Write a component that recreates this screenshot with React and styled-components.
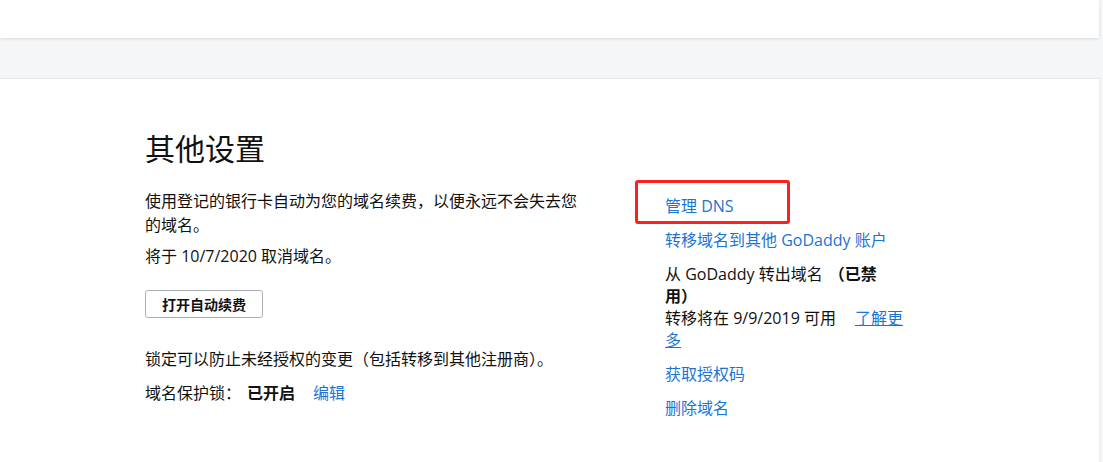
import React from "react";
import styled, { createGlobalStyle } from "styled-components";

const GlobalStyle = createGlobalStyle`
  html, body {
    margin: 0;
    padding: 0;
    background: #f5f6f8;
    font-family: "Open Sans", "Noto Sans CJK SC", sans-serif;
    color: #111;
  }
`;

const Page = styled.div`
  padding-right: 4px;
  min-height: 100vh;
  box-sizing: border-box;
  display: flex;
  flex-direction: column;
  gap: 40px;
`;

const TopCard = styled.div`
  height: 38px;
  flex-shrink: 0;
  background: #fff;
  box-shadow: 0 1px 3px rgba(0, 0, 0, 0.12);
`;

const Card = styled.section`
  flex: 1;
  background: #fff;
  border-top: 1px solid #e8e9ec;
  box-shadow: 1px 0 2px rgba(0, 0, 0, 0.06);
  padding: 50px 0 20px 145px;
`;

const Title = styled.h2`
  margin: 0 0 20px;
  font-size: 30px;
  line-height: 40px;
  font-weight: 400;
`;

const Columns = styled.div`
  display: flex;
  gap: 80px;
`;

const LeftCol = styled.div`
  width: 440px;
  display: flex;
  flex-direction: column;
`;

const Text = styled.p`
  margin: 0 0 ${(p) => p.$gap || 0}px;
  font-size: 16px;
  line-height: 24px;
`;

const Button = styled.button`
  align-self: flex-start;
  width: 118px;
  height: 28px;
  margin: 22px 0 29px;
  background: #fff;
  border: 1px solid #a9aeb5;
  border-radius: 3px;
  font-family: inherit;
  font-size: 14px;
  font-weight: 700;
  color: #111;
  padding: 0;
`;

const Strong = styled.b`
  font-weight: 700;
  margin-left: ${(p) => p.$ml || 0}px;
`;

const Link = styled.a`
  color: #1b74d4;
  text-decoration: ${(p) => (p.$underline ? "underline" : "none")};
  margin-left: ${(p) => p.$ml || 0}px;
  cursor: pointer;
`;

const RightCol = styled.div`
  width: 240px;
  padding-top: 6px;
  display: flex;
  flex-direction: column;
  gap: 12px;
`;

const Item = styled.div`
  position: relative;
  font-size: 16px;
  line-height: 22px;
`;

const Highlight = styled.span`
  position: absolute;
  left: -30px;
  top: -15px;
  width: 155px;
  height: 44px;
  box-sizing: border-box;
  border: 3px solid #ff1f1f;
  border-radius: 3px;
  pointer-events: none;
`;

export default function App() {
  return (
    <>
      <GlobalStyle />
      <Page>
        <TopCard />
        <Card>
          <Title>其他设置</Title>
          <Columns>
            <LeftCol>
              <Text $gap={7}>
                使用登记的银行卡自动为您的域名续费，以便永远不会失去您的域名。
              </Text>
              <Text>将于 10/7/2020 取消域名。</Text>
              <Button>打开自动续费</Button>
              <Text $gap={10}>
                锁定可以防止未经授权的变更（包括转移到其他注册商）。
              </Text>
              <Text>
                域名保护锁：<Strong $ml={6}>已开启</Strong>
                <Link $ml={18}>编辑</Link>
              </Text>
            </LeftCol>
            <RightCol>
              <Item>
                <Link>管理 DNS</Link>
                <Highlight />
              </Item>
              <Item>
                <Link>转移域名到其他 GoDaddy 账户</Link>
              </Item>
              <Item>
                从 GoDaddy 转出域名<Strong $ml={6}>（已禁用）</Strong>
                <br />
                转移将在 9/9/2019 可用
                <Link $ml={19} $underline>
                  了解更多
                </Link>
              </Item>
              <Item>
                <Link>获取授权码</Link>
              </Item>
              <Item>
                <Link>删除域名</Link>
              </Item>
            </RightCol>
          </Columns>
        </Card>
      </Page>
    </>
  );
}
